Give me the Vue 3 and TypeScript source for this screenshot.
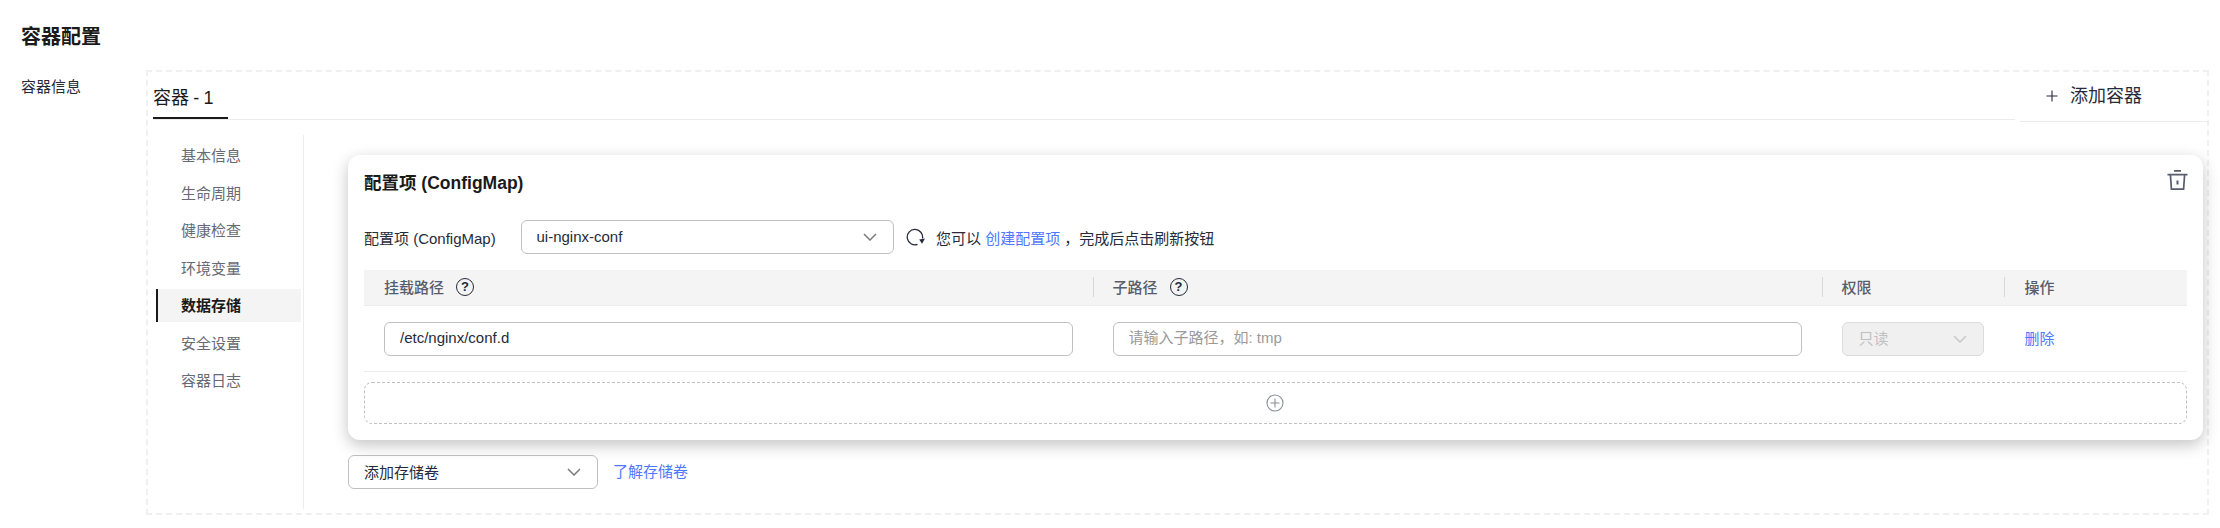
<script setup lang="ts">
const navItems: string[] = ['基本信息', '生命周期', '健康检查', '环境变量', '数据存储', '安全设置', '容器日志']
const activeNav = '数据存储'
</script>

<template>
  <div class="page">
    <h2 class="page-title">容器配置</h2>
    <div class="section">
      <div class="section-label">容器信息</div>
      <div class="box">
        <div class="tabs">
          <div class="tab-bar">
            <div class="tab">容器 - 1</div>
          </div>
          <div class="add-container">
            <svg class="add-icon" viewBox="0 0 12 12" width="12" height="12">
              <path d="M6 .5v11M.5 6h11" stroke="#252b3a" stroke-width="1.1" fill="none" />
            </svg>
            <span>添加容器</span>
          </div>
        </div>
        <div class="body">
          <ul class="nav">
            <li v-for="item in navItems" :key="item" class="nav-item" :class="{ active: item === activeNav }">{{ item }}</li>
          </ul>
          <div class="main">
            <div class="card">
              <svg class="trash" viewBox="0 0 21 20" width="21" height="20">
                <path d="M7 .9h7M.5 4.6h20M3.4 4.6l1 14.5h12.2l1-14.5" stroke="#575d6c" stroke-width="1.7" fill="none" />
                <path d="M10.5 10.5v4" stroke="#575d6c" stroke-width="2" fill="none" />
              </svg>
              <div class="card-title">配置项 (ConfigMap)</div>
              <div class="form-row">
                <label class="form-label">配置项 (ConfigMap)</label>
                <div class="select cm-select">
                  <span class="sel-text">ui-nginx-conf</span>
                  <svg class="chev" viewBox="0 0 14 8" width="14" height="8"><path d="M1 1l6 6 6-6" stroke="#7b7b7b" stroke-width="1.5" fill="none" /></svg>
                </div>
                <svg class="refresh" viewBox="0 0 20 18" width="20" height="18">
                  <path d="M11.5 16.4A7.7 7.7 0 1 1 16.5 10.5" stroke="#252b3a" stroke-width="1.3" fill="none" />
                  <path d="M13.2 11.6l5.8-1.2-3 5.4z" fill="#252b3a" />
                </svg>
                <span class="hint">您可以 <a class="link">创建配置项</a> ，完成后点击刷新按钮</span>
              </div>
              <div class="table-head">
                <div class="th"><span class="th-text">挂载路径</span><span class="help">?</span></div>
                <div class="th sep"><span class="th-text">子路径</span><span class="help">?</span></div>
                <div class="th sep"><span class="th-text">权限</span></div>
                <div class="th sep th-last"><span class="th-text">操作</span></div>
              </div>
              <div class="table-row">
                <div class="td"><input class="input" value="/etc/nginx/conf.d" readonly /></div>
                <div class="td"><input class="input" placeholder="请输入子路径，如: tmp" readonly /></div>
                <div class="td">
                  <div class="select disabled">
                    <span class="sel-text">只读</span>
                    <svg class="chev" viewBox="0 0 14 8" width="14" height="8"><path d="M1 1l6 6 6-6" stroke="#c8c8c8" stroke-width="1.5" fill="none" /></svg>
                  </div>
                </div>
                <div class="td td-last"><a class="link sel-text">删除</a></div>
              </div>
              <div class="add-row">
                <svg class="add-row-icon" viewBox="0 0 18 18" width="18" height="18">
                  <circle cx="9" cy="9" r="8" stroke="#8a8e99" stroke-width="1.1" fill="none" />
                  <path d="M9 4.5v9M4.5 9h9" stroke="#8a8e99" stroke-width="1.1" fill="none" />
                </svg>
              </div>
            </div>
            <div class="volume-row">
              <div class="select volume-select">
                <span class="sel-text">添加存储卷</span>
                <svg class="chev" viewBox="0 0 14 8" width="14" height="8"><path d="M1 1l6 6 6-6" stroke="#7b7b7b" stroke-width="1.5" fill="none" /></svg>
              </div>
              <a class="link volume-link">了解存储卷</a>
            </div>
          </div>
        </div>
      </div>
    </div>
  </div>
</template>

<style>
html, body { margin: 0; background: #fff; }
</style>

<style scoped>
.page {
  width: 2220px;
  height: 528px;
  box-sizing: border-box;
  overflow: hidden;
  padding: 24px 11px 0 21px;
  font-family: "Liberation Sans", "Noto Sans CJK SC", sans-serif;
  font-size: 15px;
  color: #252b3a;
}
.page-title { margin: 0 0 20px; font-size: 20px; line-height: 26px; font-weight: 700; color: #1a1a1a; }
.section { display: flex; }
.section-label { width: 125px; padding-top: 6px; line-height: 22px; color: #252b3a; flex: none; }
.box {
  flex: 1;
  height: 445px;
  box-sizing: border-box;
  border: 2px dashed #f0f0f0;
  padding-left: 5px;
}
.tabs { display: flex; align-items: flex-start; }
.tab-bar { flex: 1; height: 47px; border-bottom: 1px solid #ececec; }
.tab {
  width: 75px;
  height: 47px;
  box-sizing: border-box;
  padding-top: 15px;
  line-height: 22px;
  font-size: 18px;
  word-spacing: -0.8px;
  color: #1a1a1a;
  border-bottom: 2px solid #1a1a1a;
}
.add-container {
  width: 187px;
  margin-left: 5px;
  height: 50px;
  box-sizing: border-box;
  border-bottom: 1px solid #ececec;
  padding: 13px 0 0 26px;
  display: flex;
  align-items: flex-start;
  font-size: 18px;
  line-height: 22px;
  color: #252b3a;
}
.add-icon { margin: 5px 12px 0 0; }
.body { display: flex; margin-top: 13px; height: 374px; }
.nav {
  list-style: none;
  margin: 0 0 0 3px;
  padding: 4px 2px 0 0;
  width: 148px;
  box-sizing: border-box;
  border-right: 1px solid #ececec;
  display: flex;
  flex-direction: column;
  gap: 4.5px;
}
.nav-item {
  height: 33px;
  line-height: 33px;
  padding-left: 25px;
  color: #666a75;
}
.nav-item.active {
  padding-left: 23px;
  border-left: 2px solid #1a1a1a;
  background: #f4f4f4;
  color: #1a1a1a;
  font-weight: 700;
}
.main { flex: 1; padding: 20px 4.5px 0 44px; min-width: 0; }
.card {
  position: relative;
  height: 285px;
  box-sizing: border-box;
  padding: 16px 15.5px 16px 16px;
  background: #fff;
  border-radius: 12px;
  box-shadow: 0 5px 16px rgba(0, 0, 0, 0.24);
}
.trash { position: absolute; top: 15px; right: 15px; }
.card-title { font-size: 17.5px; line-height: 24px; font-weight: 700; color: #1a1a1a; }
.form-row { display: flex; align-items: center; margin-top: 25px; height: 34px; }
.form-label { width: 156.5px; flex: none; }
.select {
  height: 34px;
  box-sizing: border-box;
  border: 1.5px solid #c0c0c0;
  border-radius: 6px;
  background: #fff;
  display: flex;
  align-items: center;
  justify-content: space-between;
  padding: 0 16px 0 15px;
  color: #252b3a;
}
.sel-text { position: relative; top: -1px; }
.cm-select { width: 373.5px; flex: none; }
.refresh { margin-left: 12px; flex: none; }
.hint { margin-left: 10px; color: #252b3a; }
.link { color: #4f77ff; text-decoration: none; }
.table-head, .table-row {
  display: grid;
  grid-template-columns: 728.5px 729px 182px 1fr;
}
.table-head {
  margin-top: 16px;
  height: 36px;
  box-sizing: border-box;
  background: #f4f4f4;
  border-bottom: 1px solid #ececec;
}
.th {
  position: relative;
  display: flex;
  align-items: center;
  padding-left: 20px;
  color: #575d6c;
  font-weight: 500;
}
.th-last { padding-left: 21px; }
.th-text { position: relative; top: -1px; }
.th.sep::before {
  content: "";
  position: absolute;
  left: 0;
  top: 7px;
  width: 1px;
  height: 20px;
  background: #d8d8d8;
}
.help {
  width: 18px;
  height: 18px;
  box-sizing: border-box;
  border: 1.6px solid #252b3a;
  border-radius: 50%;
  margin: -1px 0 0 12px;
  font-size: 13px;
  line-height: 15px;
  text-align: center;
  color: #252b3a;
  font-weight: 700;
}
.table-row {
  height: 66px;
  box-sizing: border-box;
  border-bottom: 1px solid #ececec;
}
.td { display: flex; align-items: center; padding: 0 20px; min-width: 0; }
.td-last { padding-left: 21px; }
.input {
  width: 100%;
  height: 34px;
  box-sizing: border-box;
  border: 1.5px solid #c0c0c0;
  border-radius: 6px;
  padding: 0 15px 2px;
  font: inherit;
  color: #252b3a;
  outline: none;
  background: #fff;
}
.input::placeholder { color: #9a9a9a; opacity: 1; }
.select.disabled {
  width: 100%;
  padding-left: 16px;
  background: #f0f0f0;
  border-color: #dcdcdc;
  color: #c0c0c0;
}
.add-row {
  margin-top: 10px;
  height: 42px;
  box-sizing: border-box;
  border: 1px dashed #c0c0c0;
  border-radius: 8px;
  display: flex;
  align-items: center;
  justify-content: center;
}
.add-row-icon { margin-right: 2px; }
.volume-row { display: flex; align-items: center; margin-top: 15px; }
.volume-select { width: 249.5px; flex: none; margin-right: 15.5px; }
.volume-link { position: relative; top: -2px; }
</style>
